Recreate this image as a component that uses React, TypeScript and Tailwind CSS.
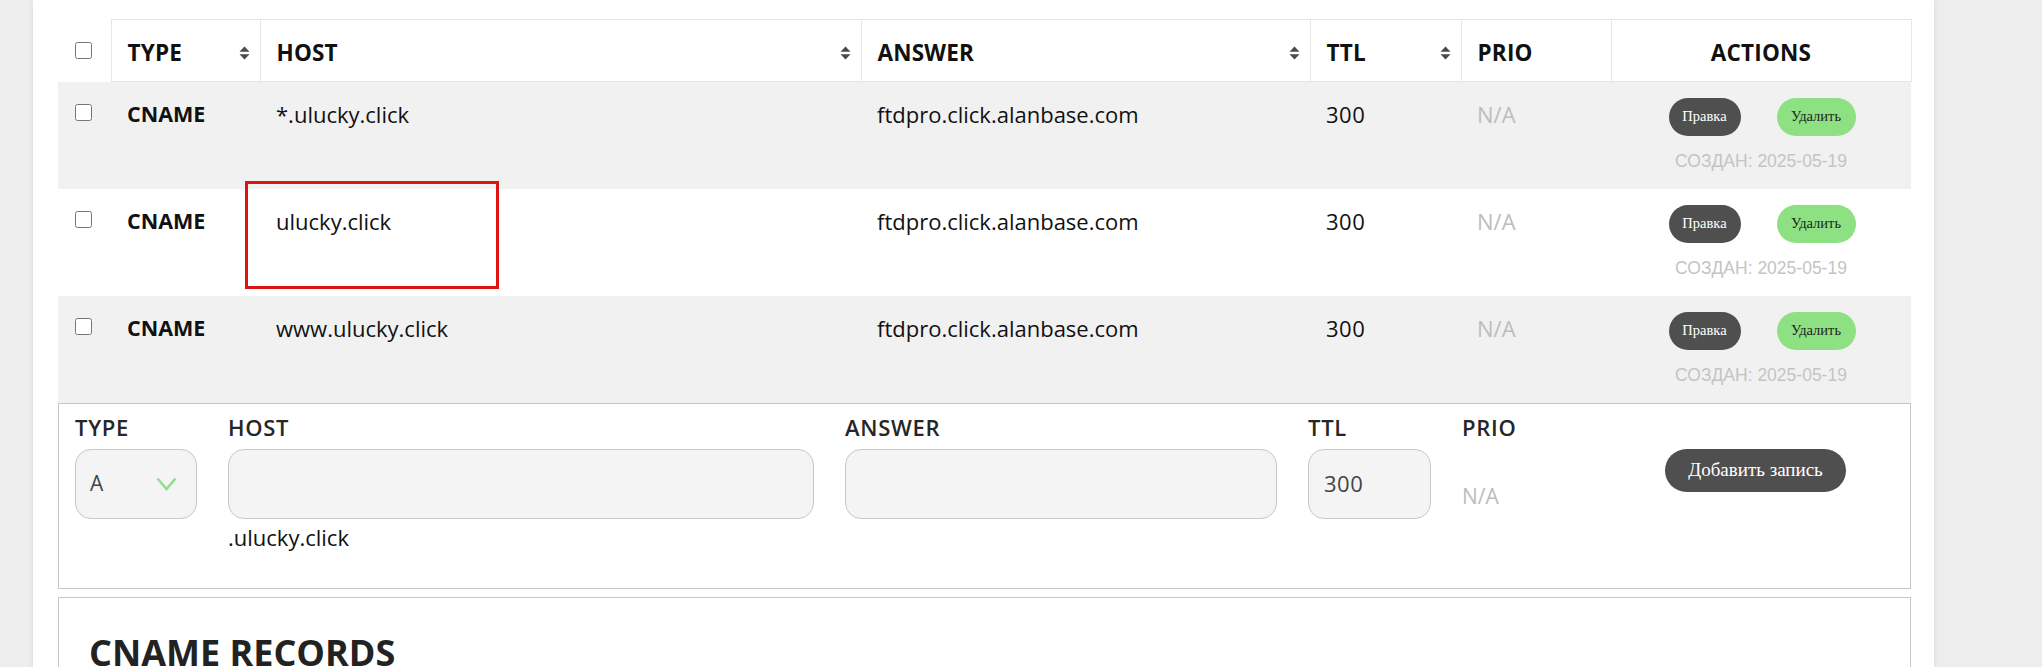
import React from "react";

const rows = [
  { type: "CNAME", host: "*.ulucky.click", answer: "ftdpro.click.alanbase.com", ttl: "300", created: "2025-05-19", marked: false },
  { type: "CNAME", host: "ulucky.click", answer: "ftdpro.click.alanbase.com", ttl: "300", created: "2025-05-19", marked: true },
  { type: "CNAME", host: "www.ulucky.click", answer: "ftdpro.click.alanbase.com", ttl: "300", created: "2025-05-19", marked: false },
];

const SortIcon = () => (
  <svg width="11" height="14" viewBox="0 0 11 14" className="shrink-0">
    <path d="M5.5 0.5 L10.5 5.8 H0.5 Z" fill="#4a4a4a" />
    <path d="M5.5 13.5 L10.5 8.2 H0.5 Z" fill="#4a4a4a" />
  </svg>
);

const Check = () => (
  <input type="checkbox" className="w-[17px] h-[17px] m-0 block" readOnly />
);

const HeadCell = ({ label, sort }: { label: string; sort?: boolean }) => (
  <th className="border border-[#e6e6e6] bg-white p-0 font-bold text-left">
    <div className="flex items-center justify-between pl-4 pr-[10px] pt-1">
      <span>{label}</span>
      {sort && <SortIcon />}
    </div>
  </th>
);

const Field = ({ label, width, children }: { label: string; width: string; children: React.ReactNode }) => (
  <div className={`flex flex-col ${width}`}>
    <div className="text-[22px] leading-[28px] font-semibold tracking-[0.7px] text-[#262626] mb-[8px]">{label}</div>
    {children}
  </div>
);

export default function App() {
  return (
    <div className="min-h-screen bg-[#ededed] pl-[33px] font-['Open_Sans',sans-serif] text-[#111]">
      <div className="w-[1901px] min-h-[667px] bg-white shadow-[0_0_6px_rgba(0,0,0,0.08)] pl-[25px] pr-[23px] pt-[19px]">
        <table className="table-fixed w-[1853px] border-collapse text-[22px]">
          <colgroup>
            <col className="w-[53px]" />
            <col className="w-[149px]" />
            <col className="w-[601px]" />
            <col className="w-[449px]" />
            <col className="w-[151px]" />
            <col className="w-[150px]" />
            <col className="w-[300px]" />
          </colgroup>
          <thead>
            <tr className="h-[62px] text-[22.5px] tracking-[0.2px]">
              <th className="p-0 align-middle">
                <div className="flex justify-center pr-[2px]">
                  <Check />
                </div>
              </th>
              <HeadCell label="TYPE" sort />
              <HeadCell label="HOST" sort />
              <HeadCell label="ANSWER" sort />
              <HeadCell label="TTL" sort />
              <HeadCell label="PRIO" />
              <th className="border border-[#e6e6e6] bg-white p-0 pt-1 font-bold text-center">ACTIONS</th>
            </tr>
          </thead>
          <tbody>
            {rows.map((r, i) => (
              <tr key={i} className={`h-[107px] ${i % 2 === 0 ? "bg-[#f1f1f1]" : "bg-white"}`}>
                <td className="align-top p-0 pt-[22px]">
                  <div className="flex justify-center pr-[2px]">
                    <Check />
                  </div>
                </td>
                <td className="align-top pl-4 pt-[18px] leading-[28px] font-bold text-[21.5px]">{r.type}</td>
                <td className="align-top pl-4 pt-[18px] leading-[28px] relative">
                  {r.host}
                  {r.marked && (
                    <div className="absolute left-[-15px] top-[-8px] w-[254px] h-[108px] border-[3px] border-[#dc1414]" />
                  )}
                </td>
                <td className="align-top pl-4 pt-[18px] leading-[28px]">{r.answer}</td>
                <td className="align-top pl-4 pt-[18px] leading-[28px] tracking-[0.5px]">{r.ttl}</td>
                <td className="align-top pl-4 pt-[18px] leading-[28px] text-[#bdbdbd]">N/A</td>
                <td className="align-top p-0 pt-[16px] text-center">
                  <div className="flex justify-center gap-[36px] pl-[2px]">
                    <button className="w-[72px] h-[38px] rounded-[19px] bg-[#4f4f4f] text-white font-['Liberation_Serif',serif] text-[14.5px]">
                      Правка
                    </button>
                    <button className="w-[79px] h-[38px] rounded-[19px] bg-[#8de182] text-[#222] font-['Liberation_Serif',serif] text-[14.5px]">
                      Удалить
                    </button>
                  </div>
                  <div className="mt-[14px] font-['Liberation_Sans',sans-serif] text-[17.5px] leading-[22px] text-[#c4c4c4]">
                    СОЗДАН: {r.created}
                  </div>
                </td>
              </tr>
            ))}
          </tbody>
        </table>

        <div className="h-[186px] border border-[#c6c6c6] pl-[16px] pt-[9px] flex items-start gap-[31px]">
          <Field label="TYPE" width="w-[122px]">
            <div className="h-[70px] rounded-[16px] border border-[#c8c8c8] bg-[#f4f4f4] flex items-center justify-between pl-[14px] pr-[19px] text-[21px] text-[#444]">
              <span>A</span>
              <svg width="21" height="14" viewBox="0 0 21 14">
                <path d="M1.5 1.5 L10.5 12 L19.5 1.5" fill="none" stroke="#8ee08a" strokeWidth="2.6" />
              </svg>
            </div>
          </Field>
          <Field label="HOST" width="w-[586px]">
            <div className="h-[70px] rounded-[16px] border border-[#c8c8c8] bg-[#f4f4f4]" />
            <div className="mt-[5px] text-[22px] leading-[26px] text-[#111]">.ulucky.click</div>
          </Field>
          <Field label="ANSWER" width="w-[432px]">
            <div className="h-[70px] rounded-[16px] border border-[#c8c8c8] bg-[#f4f4f4]" />
          </Field>
          <Field label="TTL" width="w-[123px]">
            <div className="h-[70px] rounded-[16px] border border-[#c8c8c8] bg-[#f4f4f4] flex items-center pl-[15px] text-[22px] tracking-[0.5px] text-[#444]">
              300
            </div>
          </Field>
          <Field label="PRIO" width="w-[172px]">
            <div className="h-[70px] flex items-end pb-[9px] text-[21px] leading-[28px] text-[#bdbdbd]">N/A</div>
          </Field>
          <div className="pt-[36px]">
            <button className="w-[181px] h-[43px] rounded-[22px] bg-[#4f4f4f] text-white font-['Liberation_Serif',serif] text-[19px]">
              Добавить запись
            </button>
          </div>
        </div>

        <div className="mt-[8px] h-[200px] border border-[#c6c6c6] pl-[30px] pt-[33px]">
          <h2 className="text-[36px] leading-[44px] font-bold text-[#222]">CNAME RECORDS</h2>
        </div>
      </div>
    </div>
  );
}
